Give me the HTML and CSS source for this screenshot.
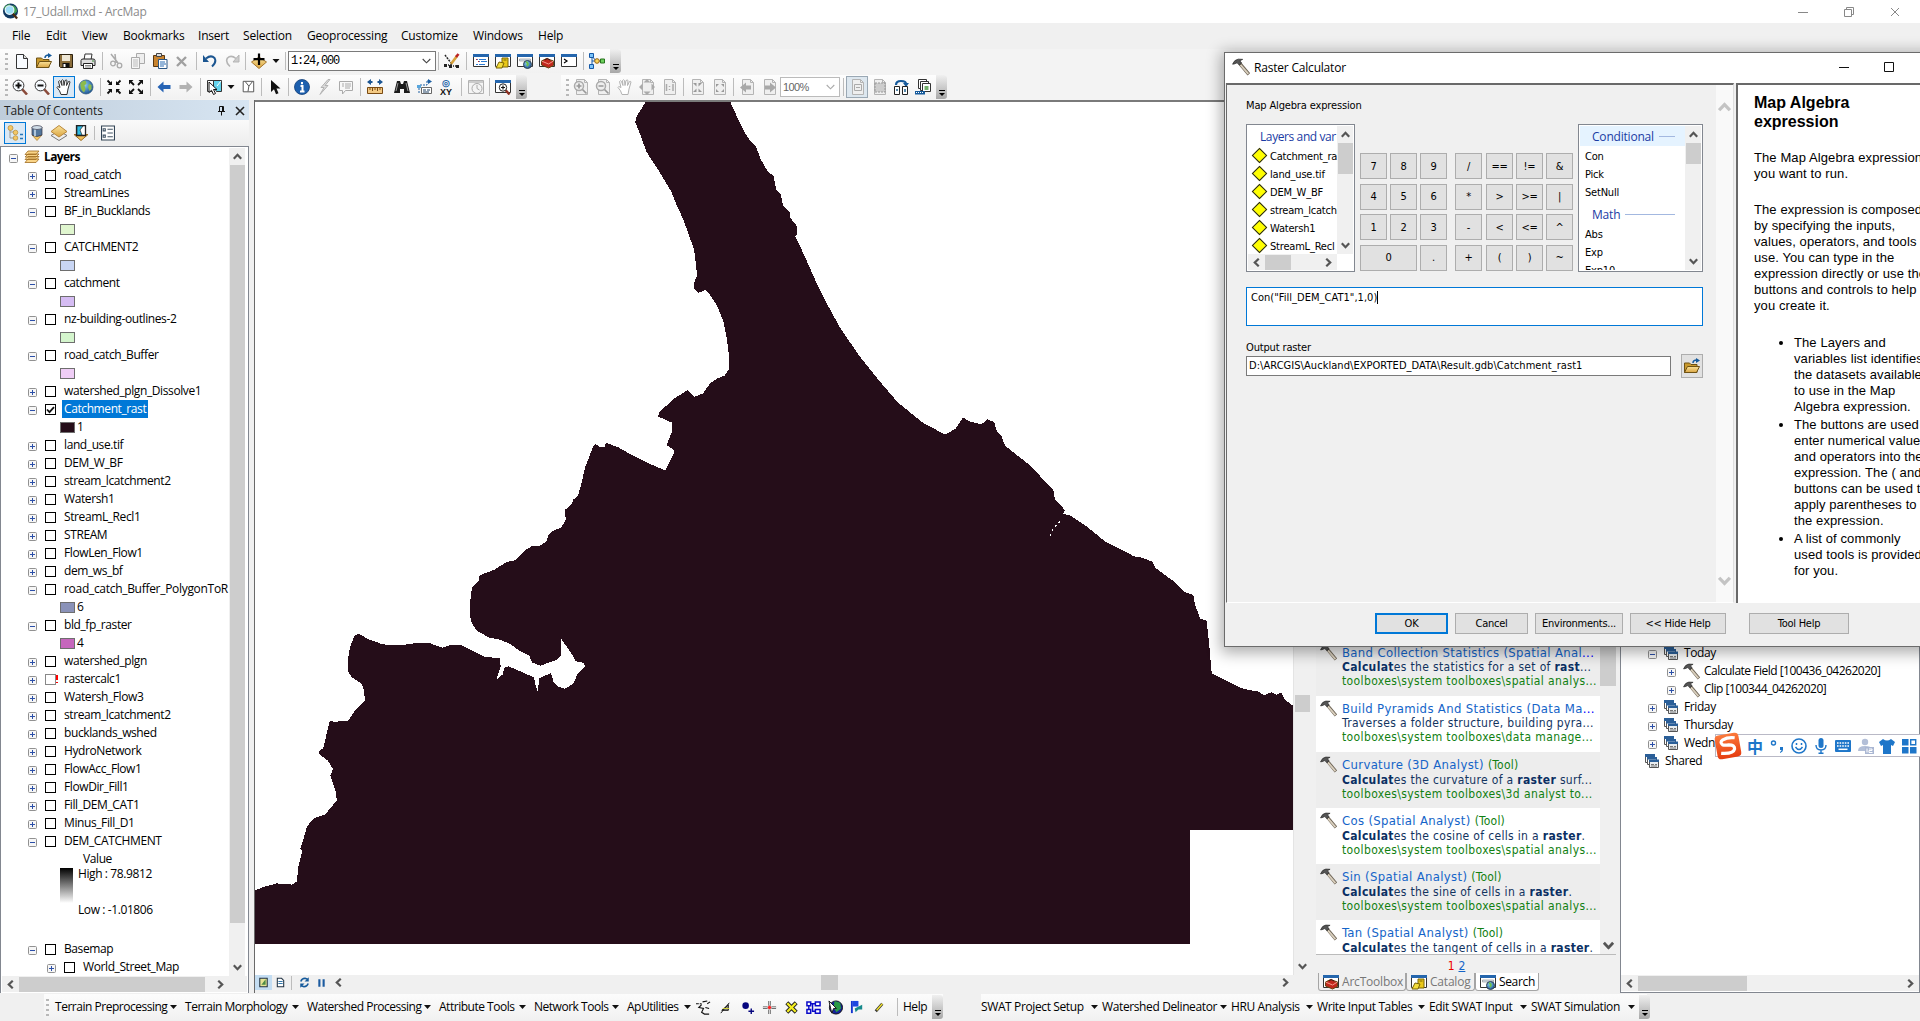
FILE: index.html
```html
<!DOCTYPE html>
<html lang="en">
<head>
<meta charset="utf-8">
<title>17_Udall.mxd - ArcMap</title>
<link rel="stylesheet" href="styles.css">
</head>
<body>
<svg class="defs" xmlns="http://www.w3.org/2000/svg">
<defs>
<linearGradient id="gold" x1="0" y1="0" x2="0" y2="1"><stop offset="0" stop-color="#fbe39a"/><stop offset="1" stop-color="#d9a441"/></linearGradient>
<radialGradient id="sphere" cx=".4" cy=".35" r=".7"><stop offset="0" stop-color="#8fd0f5"/><stop offset="1" stop-color="#164f8f"/></radialGradient>
<linearGradient id="flame" x1="0" y1="0" x2="0" y2="1"><stop offset="0" stop-color="#fb7a3c"/><stop offset="1" stop-color="#e63d10"/></linearGradient>
<symbol id="app" viewBox="0 0 18 18"><circle cx="9" cy="8.5" r="8" fill="#123a63"/><path d="M2 5q3-4 7-4l-2 3 1 3-4 3zM11 2q5 2 5 7l-3 3-2-4z" fill="#3f9c52"/><circle cx="8" cy="7.500" r="4.600" fill="#9bdcf7" stroke="#e8f6fd" stroke-width="1.200"/><path d="M11.500 11.500l4.500 5" stroke="#4a2b12" stroke-width="2.400"/></symbol>
<symbol id="new" viewBox="0 0 16 16"><path d="M2.500 1.500h7l4 4v10h-11z" fill="#f8fbff" stroke="#333"/><path d="M9.500 1.500v4h4" fill="#ddd" stroke="#333"/></symbol>
<symbol id="open" viewBox="0 0 16 16"><path d="M.5 14.500v-9.500h5l1.500 1.500h6v8z" fill="#c9992c" stroke="#6e5215"/><path d="M.5 14.500l3-6h12l-3 6z" fill="url(#gold)" stroke="#6e5215"/><path d="M9 5q0-3 4-3" fill="none" stroke="#155a9c" stroke-width="1.500"/><path d="M12 0l4 2.500-4 2.500z" fill="#155a9c"/></symbol>
<symbol id="save" viewBox="0 0 16 16"><path d="M1.500 1.500h13v13h-12l-1-1z" fill="#8a6d3b" stroke="#2b2110"/><path d="M4 2h8v6h-8z" fill="#eee7d6"/><path d="M4.500 10h7v4.500h-7z" fill="#111"/><path d="M5.500 11h2v3h-2z" fill="#fff"/></symbol>
<symbol id="print" viewBox="0 0 16 16"><path d="M4 7l1-6h7l-1 6" fill="#fff" stroke="#333"/><path d="M1 7.500q0-1.500 2-1.500h10q2 0 2 1.500v5h-14z" fill="#ddd" stroke="#222"/><path d="M3.500 10.500h9v5h-9z" fill="#fff" stroke="#222"/><path d="M5 12.500h6M5 14h6" stroke="#888"/><path d="M12 8h2" stroke="#383"/></symbol>
<symbol id="cut" viewBox="0 0 16 16"><path d="M3 1l7 9M7 1l1 9" stroke="#aaa" stroke-width="1.500" fill="none"/><circle cx="5" cy="10.500" r="2.300" fill="none" stroke="#aaa" stroke-width="1.300"/><circle cx="11.500" cy="12.500" r="2.300" fill="none" stroke="#aaa" stroke-width="1.300"/></symbol>
<symbol id="copy" viewBox="0 0 16 16"><path d="M6.500.5h8v10h-8z" fill="#eee" stroke="#aaa"/><path d="M1.500 4.500h8v11h-8z" fill="#f5f5f5" stroke="#aaa"/><path d="M3 7h5M3 9h5M3 11h5M3 13h5" stroke="#bbb"/></symbol>
<symbol id="paste" viewBox="0 0 16 16"><path d="M1.500 2.500h11v11h-11z" fill="#c9842f" stroke="#593710"/><path d="M4.500.5h5v3h-5z" fill="#ddd" stroke="#444"/><path d="M6.500 6.500h8.500v9h-8.500z" fill="#fff" stroke="#2a5685"/><path d="M8 9h5M8 11h6M8 13h4" stroke="#2a6cb3"/></symbol>
<symbol id="del" viewBox="0 0 16 16"><path d="M3 4l9 9M12 4l-9 9" stroke="#a0a0a0" stroke-width="2.400"/></symbol>
<symbol id="undo" viewBox="0 0 16 16"><path d="M4 5.500q5-4 8.500-.5 2.500 4-2.500 8.500" fill="none" stroke="#1c5691" stroke-width="2"/><path d="M1 2v7h6z" fill="#1c5691"/></symbol>
<symbol id="redo" viewBox="0 0 16 16"><path d="M12 5.500q-5-4-8.500-.5-2.500 4 2.500 8.500" fill="none" stroke="#b5b5b5" stroke-width="1.600"/><path d="M15 2v7h-6z" fill="#ccc" stroke="#b5b5b5"/></symbol>
<symbol id="add" viewBox="0 0 16 16"><path d="M8 4l7.500 5-7.500 6.500-7.500-6.500z" fill="url(#gold)" stroke="#a5762c"/><path d="M8 .5v11.500M2.500 6.200h11" stroke="#000" stroke-width="2.200"/></symbol>
<symbol id="caret" viewBox="0 0 7 4"><path d="M0 0h7l-3.500 4z" fill="#111"/></symbol>
<symbol id="edit" viewBox="0 0 16 16"><path d="M1 2l6 8M1 12h4M6 13h4M11 13h4" stroke="#222" stroke-width="1.500" stroke-dasharray="2 1"/><path d="M0 11h3v3h-3zM5 12h3v3h-3zM12 12h3v3h-3z" fill="#222"/><path d="M7 11l6-8" stroke="#d8a23c" stroke-width="2.600"/><path d="M12 4l2.500-3" stroke="#b22" stroke-width="2.600"/><path d="M6 12l2-1" stroke="#222"/></symbol>
<symbol id="frame" viewBox="0 0 16 16"><path d="M.5 1.500h15v12h-15z" fill="#fff" stroke="#333"/><path d="M0 1h16v3h-16z" fill="#2566ad"/></symbol>
<symbol id="toc" viewBox="0 0 16 16"><use href="#frame"/><path d="M3 6.500h2M6 6.500h7M5 8.500h2M8 8.500h6M3 11.500h2M6 11.500h6" stroke="#2c7ad1"/><path d="M3 6.500h1M5 8.500h1" stroke="#c22"/></symbol>
<symbol id="catalog" viewBox="0 0 16 16"><use href="#frame"/><path d="M7 5h6v9h-6z" fill="#e9c818" stroke="#7a6405"/><path d="M8.500 7h3" stroke="#7a6405"/><path d="M4 9l-3 6h6l2-5z" fill="#f3dc39" stroke="#7a6405"/></symbol>
<symbol id="search" viewBox="0 0 16 16"><use href="#frame"/><path d="M2.500 6h11v2h-11z" fill="#d7e3ee" stroke="#888" stroke-width=".6"/><circle cx="10.500" cy="11.500" r="4" fill="url(#sphere)" stroke="#345"/><path d="M9 9q3 1 1 4" stroke="#6cc04a" stroke-width="2" fill="none"/></symbol>
<symbol id="toolbox" viewBox="0 0 16 16"><use href="#frame"/><path d="M2.500 8l5-2.500 7 2.500v4.500l-5 2.500-7-3z" fill="#c1281d" stroke="#641"/><path d="M2.500 8l7 3 5-3" fill="none" stroke="#f59a8c"/><path d="M6 7q2-3 5 0" fill="none" stroke="#411"/></symbol>
<symbol id="python" viewBox="0 0 16 16"><use href="#frame"/><path d="M3 6l3 2-3 2" fill="none" stroke="#000" stroke-width="1.200"/></symbol>
<symbol id="model" viewBox="0 0 16 16"><path d="M3 3.500v10M3 8h8M3 3l4 5" stroke="#1558a7" fill="none"/><path d="M.5.5h4v4h-4zM.5 11.500h4v4h-4z" fill="#7ac4fa" stroke="#1558a7"/><circle cx="8" cy="8" r="2.300" fill="#fbd65c" stroke="#95610c"/><path d="M11.500 6h4v4h-4z" fill="#6cd05c" stroke="#26731c"/></symbol>
<symbol id="lens" viewBox="0 0 16 16"><path d="M10 10l5 5.500" stroke="#8a4a3a" stroke-width="2.600"/><circle cx="6.500" cy="6.500" r="5.400" fill="#f7fbff" stroke="#333" stroke-width="1"/></symbol>
<symbol id="zin" viewBox="0 0 16 16"><use href="#lens"/><path d="M6.500 3.500v6M3.500 6.500h6" stroke="#111" stroke-width="2"/></symbol>
<symbol id="zout" viewBox="0 0 16 16"><use href="#lens"/><path d="M3.500 6.500h6" stroke="#111" stroke-width="2"/></symbol>
<symbol id="hand" viewBox="0 0 16 16"><path d="M5 15.500q-1-4-4-7 0-2 3 0l-1.500-6q1-1.500 2 0l1.500 4-.5-5q1-1.500 2 0l.5 5 1-5q1.500-1 2 0l-.5 5 2-4q1.500-.5 1.500.5l-2 7-1 5.500z" fill="#fff" stroke="currentColor"/></symbol>
<symbol id="globe" viewBox="0 0 16 16"><circle cx="8" cy="8" r="7" fill="url(#sphere)" stroke="#345b80" stroke-width=".8"/><path d="M2.500 4q2-2.500 5-2.500l1 3-2 2 1 4-1.500 3q-4-3-3.500-9.500zM11 5l2.500 1v4l-2 2-1.500-4z" fill="#8dbb4c"/></symbol>
<symbol id="fin" viewBox="0 0 16 16"><path d="M1.500 1.500l3 3M14.500 1.500l-3 3M1.500 14.500l3-3M14.500 14.500l-3-3" stroke="currentColor" stroke-width="1.800"/><path d="M6 2v4h-4zM10 2v4h4zM6 14v-4h-4zM10 14v-4h4z" fill="currentColor"/></symbol>
<symbol id="fout" viewBox="0 0 16 16"><path d="M3 3l3 3M13 3l-3 3M3 13l3-3M13 13l-3-3" stroke="currentColor" stroke-width="1.800"/><path d="M1 1h4.500l-4.500 4.500zM15 1h-4.500l4.500 4.500zM1 15h4.500l-4.500-4.500zM15 15h-4.500l4.500-4.500z" fill="currentColor"/></symbol>
<symbol id="back" viewBox="0 0 16 16"><path d="M1.500 8l6-5.500v3.500h7v4h-7v3.500z" fill="currentColor"/></symbol>
<symbol id="fwd" viewBox="0 0 16 16"><path d="M14.500 8l-6-5.500v3.500h-7v4h7v3.500z" fill="currentColor"/></symbol>
<symbol id="selfeat" viewBox="0 0 16 16"><path d="M1.500 1.500h8l-3 11h-5z" fill="#fff" stroke="#333"/><path d="M7.500 1.500h8v11h-5l-3-5z" fill="#65d4ed" stroke="#333"/><path d="M11 7l4-5" stroke="#fff"/><path d="M3 3v10.500l2.500-2.200 2 4.200 2-1-2-4h3.500z" fill="#fff" stroke="#111"/></symbol>
<symbol id="clear" viewBox="0 0 16 16"><path d="M2.500 1.500h12v12h-12z" fill="#fff" stroke="#444"/><path d="M5 2l4 5 4-5M9 7l-1 6" fill="none" stroke="#444"/></symbol>
<symbol id="arrow" viewBox="0 0 16 16"><path d="M4 1v12l3-2.800 2 5 2.500-1-2-4.800h4z" fill="#111"/></symbol>
<symbol id="info" viewBox="0 0 16 16"><circle cx="8" cy="8" r="7.500" fill="#1c5fae" stroke="#123f78" stroke-width=".8"/><path d="M8 3v2.200M6.500 7h2v5.500M6 12.500h4.500" stroke="#fff" stroke-width="2" fill="none"/></symbol>
<symbol id="bolt" viewBox="0 0 16 16"><path d="M12 .5l-7 8h3l-4 7 8-9h-3l5-6z" fill="#ddd" stroke="#b2b2b2"/></symbol>
<symbol id="popup" viewBox="0 0 16 16"><path d="M1.500 2.500h13v9h-7l-3 3.500v-3.500h-3z" fill="#f8f8f8" stroke="#aaa"/><path d="M4 5h2M7 5h6M4 7h2M7 7h6M7 9h5" stroke="#aaa"/></symbol>
<symbol id="measure" viewBox="0 0 16 16"><path d="M0 3l4-3v2h1.500v2h-1.500v2zM16 3l-4-3v2h-1.500v2h1.500v2z" fill="#1b5593"/><path d="M.5 8.500h15v6h-15z" fill="#f3c983" stroke="#7a4a12"/><path d="M3 9v2M5.500 9v3M8 9v2M10.500 9v3M13 9v2" stroke="#7a4a12"/></symbol>
<symbol id="binoc" viewBox="0 0 16 16"><path d="M3 2h3l1 3h2l1-3h3l3 12h-6v-4h-4v4h-6z" fill="#1b1b1b"/><path d="M4 4l-2 8M12 4l2 8" stroke="#999"/></symbol>
<symbol id="route" viewBox="0 0 16 16"><path d="M3 14v-8h8v-4M11 2l3 0" stroke="#1c5fa3" fill="none" stroke-dasharray="2 1"/><path d="M12 0l4 2.500-4 2.500z" fill="#1c5fa3"/><path d="M5.500 8.500h10v6h-10z" fill="#fff" stroke="#666"/><path d="M7 11h3M11 11h3M7 13h6" stroke="#246"/><path d="M1 6h4v3h-4z" fill="#58a6dd"/></symbol>
<symbol id="clock" viewBox="0 0 16 16"><path d="M.5 1.500h15v13h-15z" fill="#f4f4f4" stroke="#b2b2b2"/><path d="M1 2h14v2h-14z" fill="#ccc"/><circle cx="9" cy="9.500" r="5" fill="#f4f4f4" stroke="#aaa"/><path d="M9 6v3.500l2.500 1.500" fill="none" stroke="#aaa"/></symbol>
<symbol id="viewer" viewBox="0 0 16 16"><use href="#frame"/><path d="M10.500 11l4 4.500" stroke="#8e3021" stroke-width="2.400"/><circle cx="8" cy="8.500" r="3.700" fill="#fff" stroke="#222"/><path d="M8 6.500v4M6 8.500h4" stroke="#111" stroke-width="1.200"/></symbol>
<symbol id="page" viewBox="0 0 16 16"><path d="M3.500.5h8l3 3v12h-11z" fill="#efefef" stroke="#b4b4b4"/><path d="M11.500.5v3h3" fill="none" stroke="#b4b4b4"/></symbol>
<symbol id="pzin" viewBox="0 0 16 16"><use href="#page"/><circle cx="6" cy="7" r="4.500" fill="#eee" stroke="#aaa" stroke-width="1.500"/><path d="M6 4.500v5M3.500 7h5M9.500 10.500l4 4" stroke="#999" stroke-width="1.700"/></symbol>
<symbol id="pzout" viewBox="0 0 16 16"><use href="#page"/><circle cx="6" cy="7" r="4.500" fill="#eee" stroke="#aaa" stroke-width="1.500"/><path d="M3.500 7h5M9.500 10.500l4 4" stroke="#999" stroke-width="1.700"/></symbol>
<symbol id="pfull" viewBox="0 0 16 16"><use href="#page"/><path d="M8 0l3.500 3.500h-7zM8 16l3.500-3.500h-7zM0 8l3.500-3.500v7zM16 8l-3.500-3.500v7z" fill="#aaa"/></symbol>
<symbol id="pone" viewBox="0 0 16 16"><use href="#page"/><path d="M5.500 5v7M12 5v7M8.500 7v1M8.500 10v1" stroke="#aaa" stroke-width="1.500"/></symbol>
<symbol id="pin1" viewBox="0 0 16 16"><use href="#page"/><path d="M4 4h3.500v3.500zM13 4h-3.500v3.500zM4 13h3.500v-3.500zM13 13h-3.500v-3.500z" fill="#999"/></symbol>
<symbol id="pout1" viewBox="0 0 16 16"><use href="#page"/><path d="M5 5h3l-3 3zM13 5h-3l3 3zM5 13h3l-3-3zM13 13h-3l3-3z" fill="#999"/></symbol>
<symbol id="pback" viewBox="0 0 16 16"><use href="#page"/><path d="M1 8.500l6-5v3h5v4h-5v3z" fill="#a8a8a8"/></symbol>
<symbol id="pfwd" viewBox="0 0 16 16"><use href="#page"/><path d="M15 8.500l-6-5v3h-5v4h5v3z" fill="#a8a8a8"/></symbol>
<symbol id="pdraft" viewBox="0 0 16 16"><use href="#page"/><path d="M5.500 5.500h7v6h-7zM7 8.500h4" fill="none" stroke="#aaa"/></symbol>
<symbol id="pfocus" viewBox="0 0 16 16"><use href="#page"/><path d="M4 4h10v9h-10z" fill="#cdcdcd" stroke="#999" stroke-dasharray="2 1"/></symbol>
<symbol id="pchange" viewBox="0 0 16 16"><path d="M3 6q0-4 5-4t5 3" fill="none" stroke="#165a9b" stroke-width="2.200"/><path d="M10 4h6l-3 4z" fill="#165a9b"/><path d="M1.500 7.500h5v8h-5zM9.500 7.500h5v8h-5z" fill="#fff" stroke="#222"/><path d="M3 10h2v2h-2zM11 10h2v3h-2z" fill="#58a"/></symbol>
<symbol id="pseries" viewBox="0 0 16 16"><path d="M3.500.5h8v9h-8z" fill="#fff" stroke="#333"/><path d="M5.500 2.500h8v9h-8z" fill="#fff" stroke="#333"/><path d="M7.500 4.500h8v8h-8z" fill="#fff" stroke="#333"/><path d="M9.500 7h4v4h-4z" fill="#72b06b"/><path d="M0 12h10v3.500h-10z" fill="#165a9b"/><path d="M1 13.500h8" stroke="#fff" stroke-dasharray="1 1"/></symbol>
<symbol id="plus" viewBox="0 0 9 9"><rect x=".5" y=".5" width="8" height="8" rx="1" fill="#f6f6f6" stroke="#919191"/><path d="M2 4.500h5M4.500 2v5" stroke="#2b4fa8"/></symbol>
<symbol id="minus" viewBox="0 0 9 9"><rect x=".5" y=".5" width="8" height="8" rx="1" fill="#f6f6f6" stroke="#919191"/><path d="M2 4.500h5" stroke="#2b4fa8"/></symbol>
<symbol id="layers" viewBox="0 0 16 14"><path d="M1 12.500l3-3.500h11l-3 3.500zM1 9.500l3-3h11l-3 3zM1 7l3-3h11l-3 3zM1 4.500l3-3.500h11l-3 3.500z" fill="#fad487" stroke="#a06c21" stroke-width=".8"/></symbol>
<symbol id="check" viewBox="0 0 11 11"><path d="M2 5.500l2.500 2.700 4.500-5" fill="none" stroke="#111" stroke-width="1.800"/></symbol>
<symbol id="tree" viewBox="0 0 16 16"><path d="M3 3v10h5M3 7h6" fill="none" stroke="#999"/><circle cx="3.500" cy="3" r="2.500" fill="#f3c766" stroke="#b68a36" stroke-width=".7"/><circle cx="8.500" cy="7.500" r="2.300" fill="#f3c766" stroke="#b68a36" stroke-width=".7"/><circle cx="8.500" cy="13" r="2.300" fill="#f3c766" stroke="#b68a36" stroke-width=".7"/><path d="M13 9.500h3M13 13.500h3" stroke="#2675b8" stroke-width="1.500"/></symbol>
<symbol id="source" viewBox="0 0 16 16"><path d="M3 10h10l-5 5.500z" fill="#f5c764" stroke="#a5762c" stroke-width=".7"/><path d="M3 2v8q5 3 10 0v-8z" fill="#54779c" stroke="#334" stroke-width=".7"/><path d="M5 3v8h2v-8z" fill="#afc6da"/><ellipse cx="8" cy="2.500" rx="5" ry="2" fill="#cfdde8" stroke="#445" stroke-width=".7"/></symbol>
<symbol id="visible" viewBox="0 0 16 16"><path d="M8 6l8 4.500-8 5-8-5z" fill="#eee" stroke="#777"/><path d="M8 .5l8 6-8 5.500-8-5.500z" fill="url(#gold)" stroke="#b9873b"/></symbol>
<symbol id="selected" viewBox="0 0 16 16"><path d="M1 9.500h14l-7 6z" fill="#f1bd58" stroke="#9c6d24"/><path d="M3.500.5h9v10h-9z" fill="#fff" stroke="#222" stroke-width="1.300"/><path d="M4 1h6l-3 4 2 5h-5z" fill="#2fbbe4" stroke="#222" stroke-width=".7"/></symbol>
<symbol id="options" viewBox="0 0 13 14"><path d="M.5.500h12v13h-12z" fill="#fff" stroke="#345"/><path d="M6 3.500h5M6 7h5M6 10.500h5" stroke="#456"/><path d="M2 3h2v2h-2zM2 9h2v2h-2z" fill="none" stroke="#456"/></symbol>
<symbol id="pin" viewBox="0 0 7 10"><path d="M1.500.5h4v5h-4zM0 5.500h7M3.500 6v3.500M4.500 1v4" fill="none" stroke="#111"/></symbol>
<symbol id="x" viewBox="0 0 10 10"><path d="M1 1l8 8M9 1l-8 8" stroke="currentColor" stroke-width="var(--w,1.6)"/></symbol>
<symbol id="up" viewBox="0 0 8 6"><path d="M.7 5l3.300-3.500 3.300 3.500" fill="none" stroke="currentColor" stroke-width="2"/></symbol>
<symbol id="down" viewBox="0 0 8 6"><path d="M.7 1l3.300 3.500 3.300-3.500" fill="none" stroke="currentColor" stroke-width="2"/></symbol>
<symbol id="drop" viewBox="0 0 9 6"><path d="M.7 1l3.800 3.800 3.800-3.800" fill="none" stroke="currentColor" stroke-width="1.100"/></symbol>
<symbol id="left" viewBox="0 0 6 8"><path d="M5 .7l-3.500 3.300 3.500 3.300" fill="none" stroke="currentColor" stroke-width="2"/></symbol>
<symbol id="right" viewBox="0 0 6 8"><path d="M1 .7l3.500 3.300-3.500 3.300" fill="none" stroke="currentColor" stroke-width="2"/></symbol>
<symbol id="hammer" viewBox="0 0 16 16"><path d="M7 5l8 9.500" stroke="#6b6254" stroke-width="3"/><path d="M7.500 6l7 8.200" stroke="#d9cfbd" stroke-width="1.700"/><path d="M.5 5.500q1.500-4 5-4.500l4 .2-2.500 1.300 1.500 2-2 1.800-2-2-2.500 1z" fill="#555" stroke="#222" stroke-width=".6"/></symbol>
<symbol id="stack" viewBox="0 0 14 14"><path d="M.5.5h9v8h-9z" fill="#fff" stroke="#555"/><path d="M0 0h10v3h-10z" fill="#2b5f98"/><path d="M2.500 3.500h9v7h-9z" fill="#fff" stroke="#555"/><path d="M2 3h10v2.500h-10z" fill="#2b5f98"/><path d="M4.500 6.500h9v7h-9z" fill="#e9edf0" stroke="#555"/><path d="M4 5.500h10v2.500h-10z" fill="#2b5f98"/><path d="M6 10.500h3M10 10.500h2M6 12h6" stroke="#777"/></symbol>
</defs>
</svg>

<div class="window">
  <header class="titlebar">
    <svg class="app-icon"><use href="#app"/></svg>
    <span class="app-title">17_Udall.mxd - ArcMap</span>
    <div class="win-controls">
      <svg width="10" height="10"><path d="M0 5.500h10" stroke="#888"/></svg>
      <svg width="10" height="10"><path d="M.5 2.500h7v7h-7zM2.500 2.500v-2h7v7h-2" fill="none" stroke="#888"/></svg>
      <svg width="10" height="10" class="thin"><use href="#x"/></svg>
    </div>
  </header>
  <nav class="menu"><span>File</span><span>Edit</span><span>View</span><span>Bookmarks</span><span>Insert</span><span>Selection</span><span>Geoprocessing</span><span>Customize</span><span>Windows</span><span>Help</span></nav>

  <div class="toolbar row-a">
    <div class="band">
      <i class="grip"></i>
      <svg><use href="#new"/></svg><svg><use href="#open"/></svg><svg><use href="#save"/></svg><svg><use href="#print"/></svg><i class="sep"></i>
      <svg><use href="#cut"/></svg><svg><use href="#copy"/></svg><svg><use href="#paste"/></svg><svg><use href="#del"/></svg><i class="sep"></i>
      <svg><use href="#undo"/></svg><svg><use href="#redo"/></svg><i class="sep s5"></i>
      <svg><use href="#add"/></svg><svg class="caret"><use href="#caret"/></svg><i class="sep"></i>
      <div class="scale"><span>1:24,000</span><svg class="chev"><use href="#drop"/></svg></div><i class="sep s5"></i>
      <svg><use href="#edit"/></svg><i class="sep s7"></i>
      <svg><use href="#toc"/></svg><svg><use href="#catalog"/></svg><svg><use href="#search"/></svg><svg><use href="#toolbox"/></svg><svg><use href="#python"/></svg><i class="sep"></i>
      <svg><use href="#model"/></svg>
      <i class="more"></i>
    </div>
  </div>
  <div class="toolbar row-b">
    <div class="band">
      <i class="grip"></i>
      <svg><use href="#zin"/></svg><svg><use href="#zout"/></svg><svg class="on"><use href="#hand"/></svg><svg><use href="#globe"/></svg><i class="sep"></i>
      <svg class="black"><use href="#fin"/></svg><svg class="black"><use href="#fout"/></svg><i class="sep"></i>
      <svg class="blue"><use href="#back"/></svg><svg class="dim"><use href="#fwd"/></svg><i class="sep"></i>
      <svg><use href="#selfeat"/></svg><svg class="caret"><use href="#caret"/></svg><svg class="small"><use href="#clear"/></svg><i class="sep s5"></i>
      <svg><use href="#arrow"/></svg><i class="sep s5"></i>
      <svg><use href="#info"/></svg><svg><use href="#bolt"/></svg><svg><use href="#popup"/></svg><i class="sep s7"></i>
      <svg class="space"><use href="#measure"/></svg><svg><use href="#binoc"/></svg><svg><use href="#route"/></svg>
      <span class="xy"><b>&#9678;</b>XY</span><i class="sep s8"></i>
      <svg><use href="#clock"/></svg><i class="sep s5"></i>
      <svg><use href="#viewer"/></svg>
      <i class="more"></i>
    </div>
    <div class="band layout-band">
      <i class="grip"></i>
      <svg><use href="#pzin"/></svg><svg><use href="#pzout"/></svg><svg class="dim"><use href="#hand"/></svg><svg><use href="#pfull"/></svg><svg><use href="#pone"/></svg><i class="sep"></i>
      <svg><use href="#pin1"/></svg><svg><use href="#pout1"/></svg><i class="sep"></i>
      <svg><use href="#pback"/></svg><svg><use href="#pfwd"/></svg>
      <div class="percent"><span>100%</span><svg class="chev"><use href="#drop"/></svg></div><i class="sep"></i>
      <svg class="on grey"><use href="#pdraft"/></svg><svg><use href="#pfocus"/></svg><svg><use href="#pchange"/></svg><svg><use href="#pseries"/></svg>
      <i class="more"></i>
    </div>
  </div>

  <main class="work">
    <aside class="toc">
      <div class="toc-head"><span>Table Of Contents</span><svg class="pin"><use href="#pin"/></svg><svg class="close"><use href="#x"/></svg></div>
      <div class="toc-tools"><svg class="on"><use href="#tree"/></svg><svg><use href="#source"/></svg><svg><use href="#visible"/></svg><svg><use href="#selected"/></svg><i class="sep"></i><svg class="opt"><use href="#options"/></svg></div>
      <div class="toc-box">
        <div class="toc-view">
          <div class="tree">
            <div class="row root"><svg class="ex"><use href="#minus"/></svg><svg class="lay"><use href="#layers"/></svg><b>Layers</b></div>
            <div class="row"><svg class="ex"><use href="#plus"/></svg><i class="cb"></i><span>road_catch</span></div>
            <div class="row"><svg class="ex"><use href="#plus"/></svg><i class="cb"></i><span>StreamLines</span></div>
            <div class="row"><svg class="ex"><use href="#minus"/></svg><i class="cb"></i><span>BF_in_Bucklands</span></div>
            <div class="row sym"><i class="sw green-a"></i></div>
            <div class="row"><svg class="ex"><use href="#minus"/></svg><i class="cb"></i><span>CATCHMENT2</span></div>
            <div class="row sym"><i class="sw blue-a"></i></div>
            <div class="row"><svg class="ex"><use href="#minus"/></svg><i class="cb"></i><span>catchment</span></div>
            <div class="row sym"><i class="sw violet"></i></div>
            <div class="row"><svg class="ex"><use href="#minus"/></svg><i class="cb"></i><span>nz-building-outlines-2</span></div>
            <div class="row sym"><i class="sw green-b"></i></div>
            <div class="row"><svg class="ex"><use href="#minus"/></svg><i class="cb"></i><span>road_catch_Buffer</span></div>
            <div class="row sym"><i class="sw pink"></i></div>
            <div class="row"><svg class="ex"><use href="#plus"/></svg><i class="cb"></i><span>watershed_plgn_Dissolve1</span></div>
            <div class="row"><svg class="ex"><use href="#minus"/></svg><i class="cb"><svg><use href="#check"/></svg></i><span class="picked">Catchment_rast</span></div>
            <div class="row sym"><i class="sw dark"></i><span>1</span></div>
            <div class="row"><svg class="ex"><use href="#plus"/></svg><i class="cb"></i><span>land_use.tif</span></div>
            <div class="row"><svg class="ex"><use href="#plus"/></svg><i class="cb"></i><span>DEM_W_BF</span></div>
            <div class="row"><svg class="ex"><use href="#plus"/></svg><i class="cb"></i><span>stream_lcatchment2</span></div>
            <div class="row"><svg class="ex"><use href="#plus"/></svg><i class="cb"></i><span>Watersh1</span></div>
            <div class="row"><svg class="ex"><use href="#plus"/></svg><i class="cb"></i><span>StreamL_Recl1</span></div>
            <div class="row"><svg class="ex"><use href="#plus"/></svg><i class="cb"></i><span>STREAM</span></div>
            <div class="row"><svg class="ex"><use href="#plus"/></svg><i class="cb"></i><span>FlowLen_Flow1</span></div>
            <div class="row"><svg class="ex"><use href="#plus"/></svg><i class="cb"></i><span>dem_ws_bf</span></div>
            <div class="row"><svg class="ex"><use href="#minus"/></svg><i class="cb"></i><span class="long">road_catch_Buffer_PolygonToR</span></div>
            <div class="row sym"><i class="sw slate"></i><span>6</span></div>
            <div class="row"><svg class="ex"><use href="#minus"/></svg><i class="cb"></i><span>bld_fp_raster</span></div>
            <div class="row sym"><i class="sw magenta"></i><span>4</span></div>
            <div class="row"><svg class="ex"><use href="#plus"/></svg><i class="cb"></i><span>watershed_plgn</span></div>
            <div class="row"><svg class="ex"><use href="#plus"/></svg><i class="cb broken"></i><span>rastercalc1</span></div>
            <div class="row"><svg class="ex"><use href="#plus"/></svg><i class="cb"></i><span>Watersh_Flow3</span></div>
            <div class="row"><svg class="ex"><use href="#plus"/></svg><i class="cb"></i><span>stream_lcatchment2</span></div>
            <div class="row"><svg class="ex"><use href="#plus"/></svg><i class="cb"></i><span>bucklands_wshed</span></div>
            <div class="row"><svg class="ex"><use href="#plus"/></svg><i class="cb"></i><span>HydroNetwork</span></div>
            <div class="row"><svg class="ex"><use href="#plus"/></svg><i class="cb"></i><span>FlowAcc_Flow1</span></div>
            <div class="row"><svg class="ex"><use href="#plus"/></svg><i class="cb"></i><span>FlowDir_Fill1</span></div>
            <div class="row"><svg class="ex"><use href="#plus"/></svg><i class="cb"></i><span>Fill_DEM_CAT1</span></div>
            <div class="row"><svg class="ex"><use href="#plus"/></svg><i class="cb"></i><span>Minus_Fill_D1</span></div>
            <div class="row"><svg class="ex"><use href="#minus"/></svg><i class="cb"></i><span>DEM_CATCHMENT</span></div>
            <div class="row value"><span>Value</span></div>
            <div class="ramp"><i></i><div><span>High : 78.9812</span><span>Low : -1.01806</span></div></div>
            <div class="row"><svg class="ex"><use href="#minus"/></svg><i class="cb"></i><span>Basemap</span></div>
            <div class="row child"><svg class="ex"><use href="#plus"/></svg><i class="cb"></i><span>World_Street_Map</span></div>
          </div>
          <div class="vscroll"><svg class="ar v"><use href="#up"/></svg><i></i><svg class="ar v"><use href="#down"/></svg></div>
        </div>
        <div class="hscroll"><svg class="ar h"><use href="#left"/></svg><i></i><svg class="ar h"><use href="#right"/></svg></div>
      </div>
    </aside>

    <section class="map">
      <div class="map-top">
        <svg class="canvas" viewBox="7.84 3.56 1627.6 1555.6" preserveAspectRatio="none" shape-rendering="crispEdges">
          <path fill="#250d19" d="M622 0L752 0 757 14 766 35 777 60 785 74 794 84 800 104 811 126 821 136 825 160 832 168 836 188 846 200 847 210 857 224 858 238 855 244 864 264 886 320 905 364 926 407 956 457 988 502 1015 538 1056 576 1090 596 1106 586 1118 566 1129 573 1147 578 1156 569 1167 574 1171 590 1178 598 1184 616 1224 652 1260 696 1262 711 1278 731 1274 738 1284 739 1312 760 1340 786 1386 813 1400 816 1415 823 1420 834 1450 859 1466 877 1479 882 1482 900 1490 924 1500 928 1504 970 1508 1022 1530 1034 1552 1047 1568 1052 1580 1053 1590 1061 1602 1055 1610 1060 1617 1056 1622 1068 1636 1080 1636 1301 1474 1301 1474 1504 0 1504 0 1412 22 1402 42 1396 66 1398 74 1392 75 1370 82 1338 79 1334 84 1317 89 1295 100 1280 118 1273 136 1248 135 1235 126 1204 130 1192 122 1177 108 1165 108 1160 115 1155 125 1106 132 1108 154 1106 164 1089 180 1070 179 1053 175 1040 159 1028 154 1018 153 1000 157 975 164 954 171 951 184 960 208 970 234 972 258 968 282 968 302 976 314 971 330 971 346 980 368 992 392 995 393 1010 386 1033 397 1023 398 1012 405 1009 424 1018 445 1029 448 1043 451 1053 454 1030 472 1021 476 1037 484 1046 494 1049 507 1040 514 1022 526 1009 523 1003 511 1000 505 988 488 960 487 990 480 998 455 1008 442 1002 438 990 422 981 408 969 390 961 375 958 356 946 348 933 345 919 346 880 349 868 358 858 360 847 383 837 403 823 416 820 432 802 443 794 454 795 465 786 469 773 478 766 488 762 495 748 494 730 504 721 507 712 514 706 520 682 525 656 538 618 542 613 548 618 556 618 558 611 576 618 596 631 628 649 651 660 665 629 665 624 653 615 662 590 662 575 640 564 642 556 665 532 686 517 697 529 710 523 722 504 733 496 744 491 751 480 751 454 747 420 742 393 732 366 721 347 714 338 703 344 697 337 696 327 701 313 699 290 696 265 688 240 679 212 669 187 660 162 642 128 622 93 612 62 604 39 606 30z"/>
          <path d="M1270 751l-5 5-4 7-4 6-2 7" fill="none" stroke="#fff" stroke-width="2" stroke-dasharray="4 5"/>
        </svg>
        <div class="vscroll map-v"><i></i><svg class="ar v"><use href="#down"/></svg></div>
      </div>
      <div class="map-bottom">
        <svg class="view on" viewBox="0 0 16 14"><path d="M4.500 3h7v8h-7z" fill="#e6e394" stroke="#234"/><path d="M6 9l4-5v5z" fill="#4b8a46"/></svg>
        <svg class="view" viewBox="0 0 16 14"><path d="M5 3h4l2 2v6h-6z" fill="#fff" stroke="#234"/><path d="M6 6h4M6 8h4" stroke="#37a"/></svg>
        <i class="sep"></i>
        <svg class="view" viewBox="0 0 16 14"><path d="M4.500 6q1-3 4-3l2.500 1M11.500 8q-1 3-4 3l-2.500-1" fill="none" stroke="#165a9b" stroke-width="1.400"/><path d="M12 2v4h-4zM4 12v-4h4z" fill="#165a9b"/></svg>
        <svg class="view" viewBox="0 0 16 14"><path d="M6 4v7M10 4v7" stroke="#1c5ba0" stroke-width="2"/></svg>
        <div class="hscroll map-h"><svg class="ar h"><use href="#left"/></svg><i></i><svg class="ar h"><use href="#right"/></svg></div>
      </div>
    </section>

    <section class="search">
      <div class="results">
        <div class="list">
          <article><svg><use href="#hammer"/></svg><div><h4>Band Collection Statistics (Spatial Anal<u>...</u></h4><p><b>Calculat</b>es the statistics for a set of <b>rast</b>...</p><p class="path">toolboxes\system toolboxes\spatial analys...</p></div></article>
          <article><svg><use href="#hammer"/></svg><div><h4>Build Pyramids And Statistics (Data Ma<u>...</u></h4><p>Traverses a folder structure, building pyra...</p><p class="path">toolboxes\system toolboxes\data manage...</p></div></article>
          <article><svg><use href="#hammer"/></svg><div><h4>Curvature (3D Analyst) <em>(Tool)</em></h4><p><b>Calculat</b>es the curvature of a <b>raster</b> surf...</p><p class="path">toolboxes\system toolboxes\3d analyst to...</p></div></article>
          <article><svg><use href="#hammer"/></svg><div><h4>Cos (Spatial Analyst) <em>(Tool)</em></h4><p><b>Calculat</b>es the cosine of cells in a <b>raster</b>.</p><p class="path">toolboxes\system toolboxes\spatial analys...</p></div></article>
          <article><svg><use href="#hammer"/></svg><div><h4>Sin (Spatial Analyst) <em>(Tool)</em></h4><p><b>Calculat</b>es the sine of cells in a <b>raster</b>.</p><p class="path">toolboxes\system toolboxes\spatial analys...</p></div></article>
          <article><svg><use href="#hammer"/></svg><div><h4>Tan (Spatial Analyst) <em>(Tool)</em></h4><p><b>Calculat</b>es the tangent of cells in a <b>raster</b>.</p></div></article>
        </div>
        <div class="vscroll search-v"><i></i><svg class="ar v"><use href="#down"/></svg></div>
      </div>
      <div class="pager"><span class="cur">1</span><a>2</a></div>
      <div class="tabs"><div class="tab t1"><svg><use href="#toolbox"/></svg><span>ArcToolbox</span></div><div class="tab t2"><svg><use href="#catalog"/></svg><span>Catalog</span></div><div class="tab active"><svg><use href="#search"/></svg><span>Search</span></div></div>
    </section>

    <section class="history">
      <div class="hrow"><svg class="ex"><use href="#minus"/></svg><svg class="st"><use href="#stack"/></svg><span>Today</span></div>
      <div class="hrow sub"><svg class="ex"><use href="#plus"/></svg><svg class="hm"><use href="#hammer"/></svg><span>Calculate Field [100436_04262020]</span></div>
      <div class="hrow sub"><svg class="ex"><use href="#plus"/></svg><svg class="hm"><use href="#hammer"/></svg><span>Clip [100344_04262020]</span></div>
      <div class="hrow"><svg class="ex"><use href="#plus"/></svg><svg class="st"><use href="#stack"/></svg><span>Friday</span></div>
      <div class="hrow"><svg class="ex"><use href="#plus"/></svg><svg class="st"><use href="#stack"/></svg><span>Thursday</span></div>
      <div class="hrow"><svg class="ex"><use href="#plus"/></svg><svg class="st"><use href="#stack"/></svg><span>Wednesday</span></div>
      <div class="hrow shared"><svg class="st"><use href="#stack"/></svg><span>Shared</span></div>
      <div class="hscroll hist-h"><svg class="ar h"><use href="#left"/></svg><i></i><svg class="ar h"><use href="#right"/></svg></div>
    </section>
  </main>

  <footer class="bottom">
    <div class="hydro">
      <i class="grip"></i>
      <span class="m1">Terrain Preprocessing</span><svg class="caret"><use href="#caret"/></svg>
      <span class="m2">Terrain Morphology</span><svg class="caret"><use href="#caret"/></svg>
      <span class="m3">Watershed Processing</span><svg class="caret"><use href="#caret"/></svg>
      <span class="m4">Attribute Tools</span><svg class="caret"><use href="#caret"/></svg>
      <span class="m5">Network Tools</span><svg class="caret"><use href="#caret"/></svg>
      <span class="m6">ApUtilities</span><svg class="caret last"><use href="#caret"/></svg>
      <svg class="ic" viewBox="0 0 16 16"><path d="M0 4h3M4 4h2M7 2l5-1M6 5l-3 3 5 1-2 4 3 2h5M12 4l3-2M10 8l4 1" fill="none" stroke="#111" stroke-width="1.200"/></svg>
      <svg class="ic" viewBox="0 0 16 16"><path d="M3 14l9-11M4 11l7-6v6z" fill="#888" stroke="#111"/><path d="M5 9h7" stroke="#dd3"/></svg>
      <svg class="ic" viewBox="0 0 16 16"><circle cx="6" cy="6" r="3.500" fill="#06067e"/><path d="M12 9v6M9 12h6" stroke="#06067e" stroke-width="1.500"/></svg>
      <svg class="ic" viewBox="0 0 16 16"><path d="M8 1v5M8 10v5M1 8h5M10 8h5" stroke="#444" stroke-width="2.400"/><path d="M8 1v5M8 10v5M1 8h5M10 8h5" stroke="#fff" stroke-width=".8"/><circle cx="8" cy="8" r="1.800" fill="#f22"/></svg>
      <svg class="ic" viewBox="0 0 16 16"><path d="M3 3l10 10M13 3l-10 10" stroke="#222" stroke-width="4.500"/><path d="M3.500 3.500l9 9M12.500 3.500l-9 9" stroke="#f5ef20" stroke-width="2.500"/></svg>
      <svg class="ic" viewBox="0 0 16 16"><path d="M5 4h5M7 4v8h3M3 6v4" stroke="#0a0ac8" fill="none" stroke-width="1.500"/><path d="M1 2h4v4h-4zM10 2h5v4h-5zM10 10h5v4h-5zM1 10h4v4h-4z" fill="#fff" stroke="#0a0ac8" stroke-width="1.600"/></svg>
      <svg class="ic" viewBox="0 0 16 16"><circle cx="8.500" cy="8" r="7" fill="#15229b" stroke="#111"/><path d="M7 1l6 2 1 6-5 4-3-5z" fill="#2a9a45"/><path d="M1 1l8 8-3 0-2 5z" fill="#fff" stroke="#111"/></svg>
      <svg class="ic" viewBox="0 0 16 16"><path d="M2 1v13" stroke="#1233cf" stroke-width="2"/><path d="M3 1h6v6h-6z" fill="#1d47e0"/><path d="M5 9l8-4v5h-4l-3 3z" fill="#168a8c"/></svg>
      <svg class="ic" viewBox="0 0 16 16"><path d="M4 12l7-8" stroke="#333" stroke-width="3"/><path d="M5 11l6-7" stroke="#f4e52e" stroke-width="1.500"/></svg>
      <i class="sep"></i><span class="help">Help</span><i class="more"></i>
    </div>
    <div class="swat">
      <span class="s-a">SWAT Project Setup</span><svg class="caret"><use href="#caret"/></svg>
      <span class="s-b">Watershed Delineator</span><svg class="caret"><use href="#caret"/></svg>
      <span class="s-c">HRU Analysis</span><svg class="caret"><use href="#caret"/></svg>
      <span class="s-d">Write Input Tables</span><svg class="caret"><use href="#caret"/></svg>
      <span class="s-e">Edit SWAT Input</span><svg class="caret"><use href="#caret"/></svg>
      <span class="s-f">SWAT Simulation</span><svg class="caret"><use href="#caret"/></svg>
      <i class="more"></i>
    </div>
  </footer>

  <div class="ime">
    <svg class="sogou" viewBox="0 0 28 28"><g transform="rotate(-10 14 14)"><rect x="2" y="2" width="24" height="24" rx="4" fill="url(#flame)"/><path d="M22 7q-7-2-12 0-4 2-1 5 2 1 6 1 6 1 5 5-2 5-14 2" fill="none" stroke="#fff" stroke-width="3.200"/></g></svg>
    <span class="zh">中</span>
    <svg viewBox="0 0 16 16"><circle cx="4.500" cy="5" r="2" fill="none" stroke="#1e76c9" stroke-width="1.400"/><path d="M11 9h3v3q0 2-3 3v-1q1.500-1 1.500-2h-1.500z" fill="#1e76c9"/></svg>
    <svg viewBox="0 0 16 16"><circle cx="8" cy="8" r="7" fill="none" stroke="#1e76c9" stroke-width="1.600"/><path d="M5.500 5v2M10.500 5v2M4.500 9q3.500 5 7 0" fill="none" stroke="#1e76c9" stroke-width="1.500"/></svg>
    <svg viewBox="0 0 16 16"><rect x="5.500" y="0" width="5" height="10" rx="2.500" fill="#1e76c9"/><path d="M3 7q0 5 5 5t5-5M8 12v4M5.500 15.300h5" fill="none" stroke="#1e76c9" stroke-width="1.400"/></svg>
    <svg viewBox="0 0 16 16"><rect y="2" width="16" height="12" rx="1" fill="#1e76c9"/><path d="M2 5h12M2 8h12" stroke="#fff" stroke-width="1.500" stroke-dasharray="1.600 1"/><path d="M3.500 11.300h9" stroke="#fff" stroke-width="1.500"/></svg>
    <svg class="wide" viewBox="0 0 16 16"><circle cx="7" cy="4" r="3.200" fill="#b3bfd8"/><path d="M0 13q0-5 7-5t5 3v2z" fill="#b3bfd8"/><rect x="7" y="9" width="9" height="7" fill="#aab7d3"/><path d="M9 10.500v4M11 11h3v1.500h-3v2h3.500" fill="none" stroke="#fff"/></svg>
    <svg viewBox="0 0 16 16"><path d="M0 4l4-3q4 3 8 0l4 3-2 4-2-1v9h-8v-9l-2 1z" fill="#1e76c9"/></svg>
    <svg viewBox="0 0 16 16"><path d="M1 1h6.500v6.500h-6.500zM1 9h6.500v6.500h-6.500zM9 9h6.500v6.500h-6.500z" fill="#1e76c9"/><path d="M9.700 1.700h5v5h-5z" fill="none" stroke="#1e76c9" stroke-width="1.400"/></svg>
  </div>

  <div class="dialog">
    <div class="dlg-title"><svg class="hm"><use href="#hammer"/></svg><span>Raster Calculator</span><svg class="mn" width="10" height="10"><path d="M0 5.500h10" stroke="#111"/></svg><svg class="mx" width="10" height="10"><path d="M.5.500h9v9h-9z" fill="none" stroke="#111"/></svg></div>
    <div class="dlg-body">
      <div class="form">
        <div class="fields">
          <label class="lbl">Map Algebra expression</label>
          <div class="calc">
            <div class="lb layers-lb">
              <div class="lb-main"><div class="lb-items">
                <div class="hd">Layers and var</div>
                <div><i class="dia"></i>Catchment_ra</div><div><i class="dia"></i>land_use.tif</div><div><i class="dia"></i>DEM_W_BF</div><div><i class="dia"></i>stream_lcatch</div><div><i class="dia"></i>Watersh1</div><div><i class="dia"></i>StreamL_Recl</div>
              </div><div class="vscroll lv"><svg class="ar v"><use href="#up"/></svg><i></i><svg class="ar v"><use href="#down"/></svg></div></div>
              <div class="hscroll lh"><svg class="ar h"><use href="#left"/></svg><i></i><svg class="ar h"><use href="#right"/></svg></div>
            </div>
            <div class="keys">
              <button>7</button><button>8</button><button>9</button><button>/</button><button>==</button><button>!=</button><button>&amp;</button>
              <button>4</button><button>5</button><button>6</button><button>*</button><button>&gt;</button><button>&gt;=</button><button>|</button>
              <button>1</button><button>2</button><button>3</button><button>-</button><button>&lt;</button><button>&lt;=</button><button>^</button>
              <button class="zero">0</button><button>.</button><button>+</button><button>(</button><button>)</button><button>~</button>
            </div>
            <div class="lb tools-lb">
              <div class="lb-main"><div class="lb-items">
                <div class="hd sel">Conditional<hr></div><div>Con</div><div>Pick</div><div>SetNull</div><div class="hd">Math<hr></div><div>Abs</div><div>Exp</div><div>Exp10</div>
              </div><div class="vscroll tv"><svg class="ar v"><use href="#up"/></svg><i></i><svg class="ar v"><use href="#down"/></svg></div></div>
            </div>
          </div>
          <div class="expr">Con("Fill_DEM_CAT1",1,0)<i></i></div>
          <label class="lbl out">Output raster</label>
          <div class="outrow"><div class="path-in">D:\ARCGIS\Auckland\EXPORTED_DATA\Result.gdb\Catchment_rast1</div><button><svg><use href="#open"/></svg></button></div>
        </div>
        <div class="form-scroll"><svg><use href="#up"/></svg><svg><use href="#down"/></svg></div>
      </div>
      <div class="helppane">
        <h2>Map Algebra<br>expression</h2>
        <p>The Map Algebra expression<br>you want to run.</p>
        <p class="second">The expression is composed<br>by specifying the inputs,<br>values, operators, and tools to<br>use. You can type in the<br>expression directly or use the<br>buttons and controls to help<br>you create it.</p>
        <ul>
          <li>The Layers and<br>variables list identifies<br>the datasets available<br>to use in the Map<br>Algebra expression.</li>
          <li>The buttons are used to<br>enter numerical values<br>and operators into the<br>expression. The ( and )<br>buttons can be used to<br>apply parentheses to<br>the expression.</li>
          <li>A list of commonly<br>used tools is provided<br>for you.</li>
        </ul>
      </div>
    </div>
    <div class="dlg-foot"><button class="ok">OK</button><button class="b2">Cancel</button><button class="b3">Environments...</button><button class="b4">&lt;&lt; Hide Help</button><button class="b5">Tool Help</button></div>
  </div>
</div>
</body>
</html>
```
FILE: styles.css
```css
* { box-sizing: border-box; margin: 0; padding: 0; }
body { width: 1920px; height: 1021px; overflow: hidden; background: #f0f0f0; font: 12px/18px "Open Sans", "Noto Sans", sans-serif; letter-spacing: -0.4px; color: #000; white-space: nowrap; }
.defs { position: absolute; width: 0; height: 0; }
svg { display: block; flex: none; }
i { display: block; flex: none; font-style: normal; }
.window { position: relative; width: 1920px; height: 1021px; display: flex; flex-direction: column; overflow: hidden; }

/* title bar and menu */
.titlebar { height: 23px; flex: none; background: #fff; display: flex; align-items: center; padding-left: 2px; color: #8b8b8b; }
.app-icon { width: 17px; height: 17px; }
.app-title { margin-left: 4px; letter-spacing: -0.25px; }
.win-controls { margin-left: auto; display: flex; gap: 36px; padding-right: 20px; color: #888; }
.thin { --w: 1; }
.menu { height: 26px; flex: none; display: grid; align-items: center; padding-left: 12px; grid-template-columns: 34px 36px 41px 75px 45px 64px 94px 72px 65px 50px; letter-spacing: -0.2px; background: #f0f0f0; }

/* toolbars */
.toolbar { flex: none; display: flex; background: #f3f3f3; }
.row-a { height: 26px; }
.row-b { height: 25px; }
.band { display: flex; align-items: center; height: 24px; background: linear-gradient(#fdfdfd, #f1f1f1); border-radius: 0 3px 3px 0; }
.row-a .band, .row-b .band { padding-left: 5px; }
.band > svg { width: 22px; height: 22px; padding: 3px; color: #333; }
.row-a .grip { margin-right: 3px; }
.row-b .grip { margin-right: 1px; }
.grip { width: 3px; height: 17px; background: repeating-linear-gradient(#b8b8b8 0 2px, transparent 2px 5px); }
.sep { width: 6px; height: 18px; background: linear-gradient(#bcbcbc, #bcbcbc) center / 1px 100% no-repeat; }
.s5 { width: 5px; } .s7 { width: 7px; } .s8 { width: 8px; }
.band > svg.caret { width: 12px; height: 4px; padding: 0 2px; }
.band > svg.on { background: #d9e8f5; border: 1px solid #0078d7; padding: 2px; }
.band > svg.grey { background: #dde7ef; border-color: #9aa8b4; }
.band > svg.blue { color: #2764b5; }
.band > svg.black { color: #111; }
.band > svg.dim { color: #b2b2b2; }
.band > svg.small { padding: 4px; }
.band > svg.space { margin-right: 5px; }
.more { width: 11px; height: 24px; margin-left: 2px; background: linear-gradient(#f0f0f0, #a8a8a8); display: flex; flex-direction: column; justify-content: flex-end; align-items: center; padding-bottom: 3px; border-radius: 0 3px 3px 0; }
.more::before { content: ""; width: 6px; height: 1px; background: #000; margin-bottom: 2px; }
.more::after { content: ""; border: 3px solid transparent; border-top: 3px solid #000; border-bottom: 0; }
.scale { width: 148px; height: 20px; border: 1px solid #7a7a7a; background: #fff; display: flex; align-items: center; justify-content: space-between; padding: 0 4px 0 2px; font: 12px "Liberation Mono", monospace; letter-spacing: -1.2px; }
.chev { width: 9px; height: 6px; color: #444; }
.xy { width: 22px; text-align: center; font: bold 9px/8px "Liberation Sans", sans-serif; letter-spacing: 0; display: flex; flex-direction: column; align-items: center; color: #111; }
.xy b { color: #1b62a8; font-size: 9px; line-height: 9px; }
.layout-band { margin-left: 34px; }
.percent { width: 60px; height: 20px; border: 1px solid #bbb; background: #fff; display: flex; align-items: center; justify-content: space-between; padding: 0 4px 0 2px; color: #666; font: 11px "Liberation Sans Narrow", "Liberation Sans", sans-serif; letter-spacing: -0.6px; }
.percent .chev { color: #aaa; }

/* scroll bars */
.vscroll { width: 16px; flex: none; background: #f0f0f0; display: flex; flex-direction: column; align-items: center; }
.vscroll i { width: 15px; background: #cdcdcd; }
.hscroll { height: 16px; flex: none; background: #f0f0f0; display: flex; align-items: center; }
.hscroll i { height: 15px; background: #cdcdcd; }
.ar { color: #555; }
.ar.v { width: 15px; height: 17px; padding: 5px 3px; }
.ar.h { width: 17px; height: 15px; padding: 3px 5px; }

/* work area */
.work { height: 893px; flex: none; display: flex; background: #f0f0f0; }
.toc { width: 249px; margin-right: 5px; display: flex; flex-direction: column; }
.toc-head { height: 20px; flex: none; display: flex; align-items: center; padding: 1px 0 0 4px; background: linear-gradient(90deg, #bfcddb, #d7e5f2); color: #222; letter-spacing: -0.1px; }
.toc-head .pin { width: 7px; height: 10px; margin-left: auto; }
.toc-head .close { width: 10px; height: 10px; margin: 0 4px 0 10px; }
.toc-tools { height: 26px; flex: none; display: flex; align-items: center; padding-left: 4px; background: linear-gradient(#fafafa, #ededed); }
.toc-tools svg { width: 22px; height: 22px; padding: 3px; }
.toc-tools svg.on { background: #d9e8f5; border: 1px solid #0078d7; padding: 2px; }
.toc-tools .sep { width: 4px; height: 14px; }
.toc-tools .opt { padding: 3px 4px; margin-left: 1px; }
.toc-box { flex: 1; border: 1px solid #828790; background: #fff; padding: 1px 1px 2px; display: flex; flex-direction: column; }
.toc-view { flex: 1; display: flex; min-height: 0; }
.tree { width: 228px; overflow: hidden; }
.row { height: 18px; display: flex; align-items: center; padding-left: 26px; }
.row .ex { width: 9px; height: 9px; margin-right: 8px; position: relative; top: 1px; }
.row.root { padding-left: 7px; letter-spacing: -0.6px; }
.row.root .ex { margin-right: 6px; }
.lay { width: 16px; height: 14px; margin-right: 4px; }
.cb { width: 11px; height: 11px; border: 1px solid #000; background: #fff; margin-right: 6px; position: relative; }
.cb svg { width: 11px; height: 11px; margin: -1px; }
.cb.broken { border-color: #888; }
.cb.broken::after { content: ""; position: absolute; left: 10px; top: 0; width: 2px; height: 8px; background: linear-gradient(red 0 5px, transparent 5px 7px, red 7px); }
.row span { padding: 0 2px; line-height: 18px; }
.row .long { letter-spacing: -0.3px; padding-right: 0; }
.row .picked { background: #0078d7; color: #fff; }
.row.sym { padding-left: 58px; }
.row.child { padding-left: 45px; }
.row.value { padding-left: 79px; }
.sw { width: 15px; height: 11px; border: 1px solid #6e6e6e; }
.green-a { background: #e0f6cf; } .blue-a { background: #c9d6f4; } .violet { background: #d5bcf3; } .green-b { background: #d4f5cd; } .pink { background: #efcdf6; } .dark { background: #250d19; } .slate { background: #8a92b8; } .magenta { background: #c667bd; }
.ramp { height: 72px; display: flex; padding-left: 58px; }
.ramp i { width: 13px; height: 35px; background: linear-gradient(#000, #fff); }
.ramp div { margin: -3px 0 0 5px; display: flex; flex-direction: column; gap: 18px; }
.toc-view .vscroll { margin-left: -1px; }
.toc-view .vscroll i { height: 758px; }
.toc-view .vscroll .ar:last-child { margin-top: auto; }
.toc-box > .hscroll i { width: 186px; }
.toc-box > .hscroll .ar:last-child { margin-left: 7px; }

/* map */
.map { width: 1056px; display: flex; flex-direction: column; border-left: 1px solid #696969; }
.map-top { height: 875px; border-top: 2px solid #7a7a7a; display: flex; background: #fff; }
.canvas { width: 1038px; height: 873px; }
.map-v { width: 17px; border-left: 1px solid #e4e4e4; }
.map-v i { height: 17px; margin-top: 593px; }
.map-v .ar { margin-top: auto; }
.map-bottom { height: 15px; display: flex; align-items: center; background: #f0f0f0; }
.view { width: 17px; height: 15px; }
.view.on { background: #c4ddf2; }
.map-bottom .sep { width: 5px; margin: 0 2px 0 0; height: 14px; }
.map-h { flex: 1; height: 15px; }
.map-h i { width: 17px; margin-left: 474px; }
.map-h .ar:last-child { margin-left: auto; margin-right: 16px; }

/* search panel */
.search { width: 300px; margin-left: 6px; display: flex; flex-direction: column; font-family: "DejaVu Sans Condensed", sans-serif; letter-spacing: 0; }
.results { height: 855px; display: flex; padding-top: 540px; border-bottom: 1px solid #bbb; }
.list { width: 284px; overflow: hidden; }
article { height: 56px; display: flex; padding: 4px 0 0 4px; background: #ededed; }
article:nth-child(even) { background: #fff; }
article:last-child { height: 34px; }
article svg { width: 17px; height: 17px; margin-right: 5px; }
article h4 { font-weight: normal; font-size: 13px; line-height: 17px; margin-bottom: -1px; color: #1464c8; letter-spacing: 0.33px; }
article h4 u { color: #00f; text-decoration: none; }
article em { font-style: normal; color: #118011; font-size: 12px; letter-spacing: 0.2px; }
article p { font-size: 12px; line-height: 14px; color: #12345f; letter-spacing: 0.33px; }
article p b { color: #0b2f63; }
article .path { color: #118011; margin-top: 1px; letter-spacing: 0.38px; line-height: 13px; }
.search-v i { width: 16px; height: 46px; }
.search-v .ar { margin-top: auto; transform: scale(1.25); }
.pager { height: 18px; background: #f0f0f0; display: flex; justify-content: center; gap: 4px; font-size: 12px; line-height: 23px; padding-right: 19px; }
.pager .cur { color: #e00; }
.pager a { color: #1464c8; text-decoration: underline; }
.tabs { height: 18px; display: flex; padding-left: 2px; font: 12px/18px "Open Sans", sans-serif; letter-spacing: -0.1px; }
.tab { display: flex; align-items: center; border: 1px solid #a5a5a5; border-top: 0; border-radius: 0 0 3px 3px; padding-left: 4px; color: #777; }
.tab svg { width: 16px; height: 16px; margin-right: 3px; }
.t1 { width: 88px; letter-spacing: -0.2px; } .t2 { width: 69px; letter-spacing: -0.2px; }
.tab.active { background: #fff; color: #000; width: 64px; letter-spacing: -0.35px; }

/* geoprocessing results */
.history { width: 300px; margin-left: 4px; background: #fff; border: 1px solid #828790; padding: 543px 0 1px; display: flex; flex-direction: column; }
.hrow { height: 18px; display: flex; align-items: center; padding-left: 27px; }
.hrow .ex { width: 9px; height: 9px; margin-right: 7px; position: relative; top: 1px; }
.hrow .st { width: 14px; height: 14px; margin-right: 6px; }
.hrow .hm { width: 17px; height: 17px; margin-right: 4px; }
.hrow.sub { padding-left: 46px; letter-spacing: -0.5px; }
.hrow.shared { padding-left: 24px; }
.hist-h { margin-top: auto; }
.hist-h i { width: 109px; }
.hist-h .ar:last-child { margin-left: auto; }

/* bottom toolbars */
.bottom { height: 28px; flex: none; display: flex; align-items: center; background: #f0f0f0; }
.bottom > div { height: 26px; display: flex; align-items: center; background: linear-gradient(#fcfcfc, #f1f1f1); flex: none; }
.bottom span { flex: none; }
.hydro { margin-left: 44px; padding-left: 2px; width: 899px; letter-spacing: -0.48px; }
.hydro .grip { margin-right: 6px; }
.m1 { width: 112px; } .m2 { width: 104px; } .m3 { width: 114px; } .m4 { width: 77px; } .m5 { width: 75px; } .m6 { width: 54px; }
.bottom .caret { width: 7px; height: 4px; margin: 0 8px 0 3px; }
.bottom .caret.last { margin-right: 5px; }
.ic { width: 15px; height: 15px; margin-right: 7px; }
.bottom .help { margin-left: 3px; }
.bottom .more { margin-left: auto; }
.swat { margin-left: 38px; width: 666px; letter-spacing: -0.38px; }
.swat .caret { margin: 0 4px 0 3px; }
.s-a { width: 107px; } .s-b { width: 115px; } .s-c { width: 72px; } .s-d { width: 98px; } .s-e { width: 88px; } .s-f { width: 94px; }

/* input method bar */
.ime { position: absolute; left: 1715px; top: 734px; width: 206px; height: 23px; border: 1px solid #b9b9c6; background: #fff; display: flex; align-items: center; }
.ime svg { width: 16px; height: 16px; margin-right: 6px; }
.ime .sogou { width: 28px; height: 28px; margin: 0 5px 0 -2px; }
.ime .zh { width: 16px; margin-right: 6px; color: #1e76c9; font: bold 16px/20px "Noto Sans CJK SC", sans-serif; letter-spacing: 0; }
.ime .wide { margin: 0 5px 0 1px; }

/* raster calculator window */
.dialog { position: absolute; left: 1224px; top: 52px; width: 720px; height: 595px; border: 1px solid #6b6b6b; background: #f0f0f0; box-shadow: 0 3px 14px 3px rgba(0,0,0,.32); font: 11px/14px "DejaVu Sans Condensed", sans-serif; letter-spacing: -0.2px; display: flex; flex-direction: column; }
.dlg-title { height: 30px; flex: none; background: #fff; display: flex; align-items: center; padding: 0 0 2px 7px; font: 12px "Open Sans", sans-serif; letter-spacing: -0.2px; }
.dlg-title .hm { width: 18px; height: 18px; margin-right: 4px; }
.dlg-title .mn { position: absolute; left: 614px; }
.dlg-title .mx { position: absolute; left: 659px; }
.dlg-body { height: 520px; flex: none; display: flex; }
.form { width: 508px; margin-left: 1px; border: 1px solid #696969; border-width: 2px 1px 1px 1px; border-right-color: #dedede; border-bottom-color: #fff; display: flex; }
.fields { width: 489px; padding: 14px 0 0 19px; }
.form-scroll { flex: 1; background: #f9f9f9; display: flex; flex-direction: column; align-items: center; justify-content: space-between; padding: 17px 0 16px; color: #c4c4c4; }
.form-scroll svg { width: 13px; height: 10px; }
.lbl { display: block; height: 14px; letter-spacing: -0.15px; }
.calc { display: flex; height: 148px; margin-top: 11px; }
.lb { border: 1px solid #828790; background: #fff; padding: 1px; height: 148px; }
.layers-lb { width: 109px; }
.tools-lb { width: 125px; margin-left: 4px; }
.lb-main { display: flex; height: 144px; }
.layers-lb .lb-main { height: 128px; }
.lb-items { flex: 1; overflow: hidden; }
.lb-items > div { height: 18px; line-height: 18px; display: flex; align-items: center; padding: 1px 0 0 5px; }
.lb-items > .hd { height: 20px; margin-bottom: 1px; padding: 0 0 0 12px; color: #1a3ca4; font: 12px "Open Sans", sans-serif; letter-spacing: -0.2px; }
.layers-lb .lb-items > .hd { letter-spacing: -0.4px; }
.lb-items > .hd ~ .hd { height: 24px; margin-bottom: 0; padding-top: 2px; }
.hd hr { border: 0; height: 1px; background: #a3b8e0; flex: 1; margin: 0 10px 0 5px; }
.lb-items > .sel { background: #e5f3ff; }
.dia { width: 11px; height: 11px; background: #ff0; border: 1px solid #222; transform: rotate(45deg); margin: -3px 5px 0 1px; }
.lv i { height: 31px; } .tv i { height: 21px; }
.lv .ar:last-child, .tv .ar:last-child { margin-top: auto; }
.lh { width: 89px; }
.lh i { width: 26px; }
.lh .ar:last-child { margin-left: auto; }
.keys { width: 214px; margin: 29px 0 0 5px; display: grid; grid-template-columns: 30px 30px 35px 31px 30px 30px 28px; row-gap: 4.600px; grid-template-rows: repeat(4, 26px); }
.keys button { width: 27px; }
button { border: 1px solid #adadad; background: #e1e1e1; font: 11px "DejaVu Sans Condensed", sans-serif; letter-spacing: -0.25px; color: #000; display: flex; align-items: center; justify-content: center; }
.keys .zero { grid-column: span 2; width: 57px; }
.expr { width: 457px; height: 39px; margin-top: 15px; border: 1px solid #0078d7; background: #fff; padding: 3px 4px; display: flex; align-items: flex-start; letter-spacing: 0.03px; }
.expr i { width: 1px; height: 13px; background: #000; }
.lbl.out { margin-top: 14px; padding-top: 1px; }
.outrow { display: flex; align-items: center; }
.path-in { width: 425px; height: 20px; border: 1px solid #7a7a7a; background: #fff; line-height: 18px; padding-left: 2px; letter-spacing: 0.05px; }
.outrow button { width: 22px; height: 24px; margin-left: 10px; }
.outrow svg { width: 16px; height: 16px; }
.helppane { flex: 1; margin-left: 2px; border: 1px solid #696969; border-width: 2px 0 0 2px; background: #fff; padding: 8px 0 0 16px; font: 13px/16px "Liberation Sans", sans-serif; letter-spacing: 0.1px; overflow: hidden; }
.helppane h2 { font-size: 16px; line-height: 19px; letter-spacing: 0; }
.helppane p { margin-top: 19px; }
.helppane .second { margin-top: 20px; }
.helppane ul { margin: 21px 0 0 40px; }
.helppane li { margin-bottom: 2px; }
.dlg-foot { flex: 1; display: flex; padding: 10px 0 0 150px; }
.dlg-foot button { height: 21px; width: 73px; margin-right: 7px; }
.dlg-foot .ok { border: 2px solid #0078d7; }
.dlg-foot .b3 { width: 88px; }
.dlg-foot .b4 { width: 96px; margin-right: 23px; }
.dlg-foot .b5 { width: 100px; }
```
